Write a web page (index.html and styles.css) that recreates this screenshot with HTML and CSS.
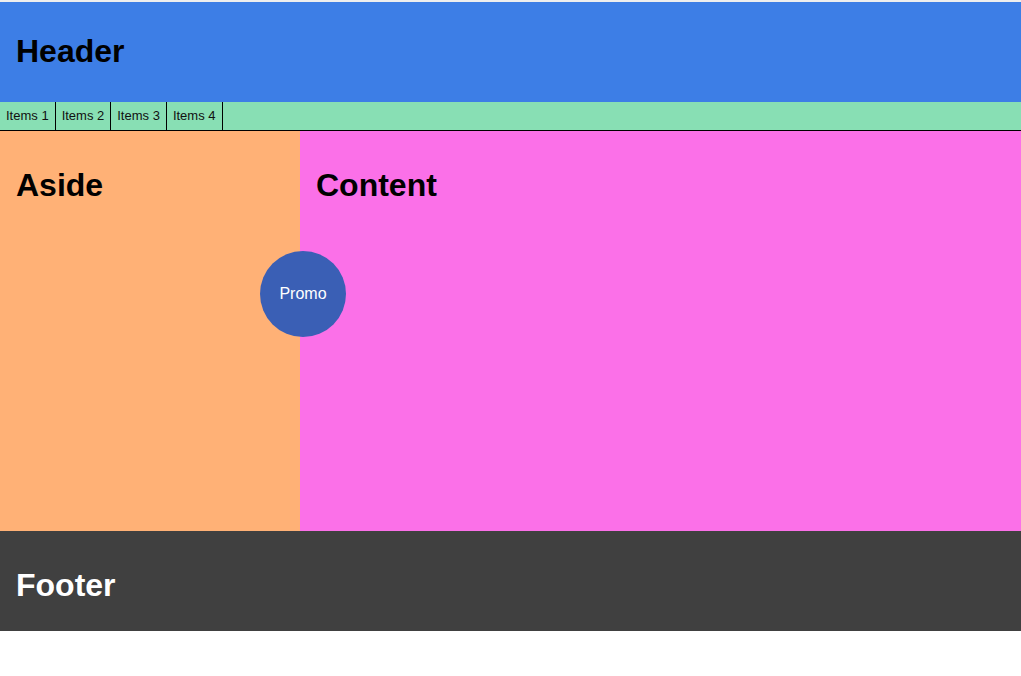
FILE: index.html
```html
<!DOCTYPE html>
<html>
<head>
<meta charset="utf-8">
<link rel="stylesheet" href="styles.css">
</head>
<body>
<div class="page">
  <header class="header"><h1>Header</h1></header>
  <nav class="nav">
    <a class="nav-item">Items 1</a>
    <a class="nav-item">Items 2</a>
    <a class="nav-item">Items 3</a>
    <a class="nav-item">Items 4</a>
  </nav>
  <main class="main">
    <aside class="aside"><h1>Aside</h1></aside>
    <section class="content"><h1>Content</h1></section>
    <div class="promo">Promo</div>
  </main>
  <footer class="footer"><h1>Footer</h1></footer>
</div>
</body>
</html>
```
FILE: styles.css
```css
html, body {
  margin: 0;
  padding: 0;
  background: #ffffff;
  font-family: "Liberation Sans", Arial, sans-serif;
}
.page {
  border-top: 2px solid #eeeeee;
  display: flex;
  flex-direction: column;
}
h1 {
  margin: 0;
  font-size: 32px;
  font-weight: bold;
  line-height: 37px;
}
.header {
  background: #3d7ee6;
  height: 100px;
  box-sizing: border-box;
  padding: 31px 16px 0;
  color: #000;
}
.nav {
  display: flex;
  height: 29px;
  box-sizing: border-box;
  background: #88dfb4;
  border-bottom: 1px solid #000;
}
.nav-item {
  display: flex;
  align-items: center;
  padding: 0 6px 2px;
  border-right: 1px solid #000;
  font-size: 13px;
  color: #111;
}
.main {
  position: relative;
  display: flex;
  height: 400px;
}
.aside {
  width: 300px;
  background: #ffb176;
  box-sizing: border-box;
  padding: 36px 16px 0;
}
.content {
  flex: 1;
  background: #fb70e8;
  box-sizing: border-box;
  padding: 36px 16px 0;
}
.promo {
  position: absolute;
  left: 260px;
  top: 120px;
  width: 86px;
  height: 86px;
  border-radius: 50%;
  background: #3a5fb5;
  color: #fff;
  font-size: 16px;
  display: flex;
  align-items: center;
  justify-content: center;
}
.footer {
  background: #404040;
  height: 100px;
  box-sizing: border-box;
  padding: 36px 16px 0;
  color: #fff;
}
```
